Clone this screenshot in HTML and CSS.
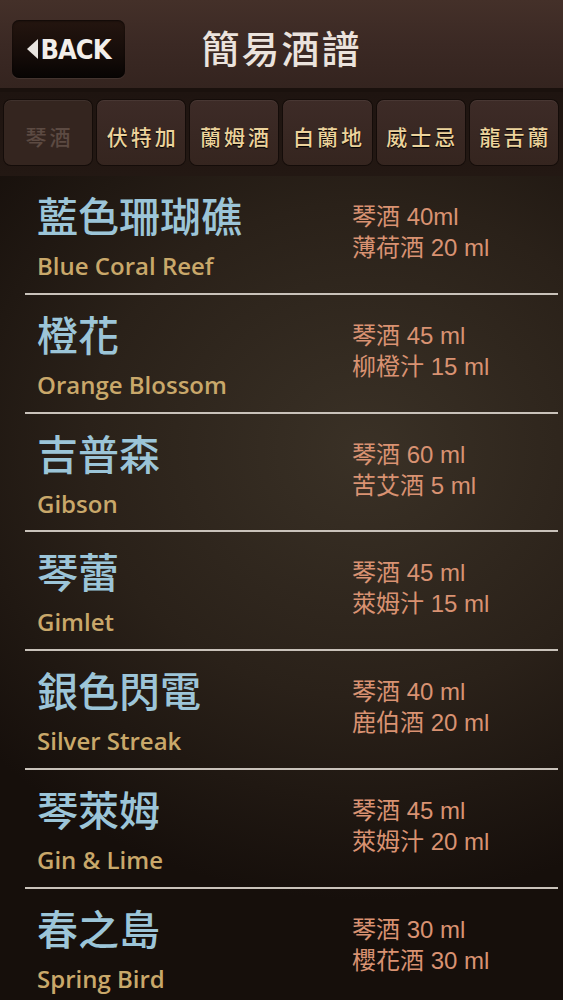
FILE: index.html
```html
<!DOCTYPE html>
<html lang="zh-Hant">

<head>
    <meta charset="UTF-8">
    <meta name="viewport" content="width=device-width, initial-scale=1.0">
    <title>簡易酒譜</title>
    <link rel="stylesheet" href="styles.css">
</head>

<body>
    <div class="header">
        <a href="javascript:;" class="back"><span class="arrow"></span>BACK</a>
        <h1 class="title">簡易酒譜</h1>
        <span></span>
    </div>
    <ul class="tabs">
        <li class="current">琴酒</li>
        <li>伏特加</li>
        <li>蘭姆酒</li>
        <li>白蘭地</li>
        <li>威士忌</li>
        <li>龍舌蘭</li>
    </ul>
    <ul class="list">
        <li>
            <div class="name">
                <h2>藍色珊瑚礁</h2>
                <p>Blue Coral Reef</p>
            </div>
            <div class="recipe">
                <p>琴酒 40ml</p>
                <p>薄荷酒 20 ml</p>
            </div>
        </li>
        <li>
            <div class="name">
                <h2>橙花</h2>
                <p>Orange Blossom</p>
            </div>
            <div class="recipe">
                <p>琴酒 45 ml</p>
                <p>柳橙汁 15 ml</p>
            </div>
        </li>
        <li>
            <div class="name">
                <h2>吉普森</h2>
                <p>Gibson</p>
            </div>
            <div class="recipe">
                <p>琴酒 60 ml</p>
                <p>苦艾酒 5 ml</p>
            </div>
        </li>
        <li>
            <div class="name">
                <h2>琴蕾</h2>
                <p>Gimlet</p>
            </div>
            <div class="recipe">
                <p>琴酒 45 ml</p>
                <p>萊姆汁 15 ml</p>
            </div>
        </li>
        <li>
            <div class="name">
                <h2>銀色閃電</h2>
                <p>Silver Streak</p>
            </div>
            <div class="recipe">
                <p>琴酒 40 ml</p>
                <p>鹿伯酒 20 ml</p>
            </div>
        </li>
        <li>
            <div class="name">
                <h2>琴萊姆</h2>
                <p>Gin &amp; Lime</p>
            </div>
            <div class="recipe">
                <p>琴酒 45 ml</p>
                <p>萊姆汁 20 ml</p>
            </div>
        </li>
        <li>
            <div class="name">
                <h2>春之島</h2>
                <p>Spring Bird</p>
            </div>
            <div class="recipe">
                <p>琴酒 30 ml</p>
                <p>櫻花酒 30 ml</p>
            </div>
        </li>
    </ul>
</body>

</html>
```

FILE: styles.css
```css
* {
    margin: 0;
    padding: 0;
    box-sizing: border-box;
}

ul,
ol {
    list-style: none;
}

html,
body {
    height: 100%;
}

body {
    overflow: hidden;
    font-family: "Liberation Sans", "Noto Sans CJK TC", sans-serif;
    background: radial-gradient(ellipse 90% 45% at 65% 45%, #3a3126 0%, #2a2119 55%, #160f0b 100%);
    background-color: #1d1510;
}

/* 頂部標題列 */
.header {
    display: grid;
    grid-template-columns: 1fr auto 1fr;
    align-items: start;
    height: 92px;
    padding: 20px 12px 0;
    background: linear-gradient(#443029 0%, #3b2924 50%, #34241f 100%);
    border-bottom: 4px solid #1a110d;
}

.back {
    display: flex;
    align-items: center;
    justify-content: center;
    width: 113px;
    height: 58px;
    border-radius: 7px;
    background: linear-gradient(#24150f 0%, #150c09 60%, #070403 100%);
    box-shadow: 0 1px 1px rgba(255, 255, 255, 0.08), inset 0 1px 2px rgba(0, 0, 0, 0.6);
    color: #f2eeea;
    text-decoration: none;
    font-family: "DejaVu Sans Condensed", "DejaVu Sans", sans-serif;
    font-weight: bold;
    font-size: 27px;
    letter-spacing: -1px;
    justify-self: start;
}

.arrow {
    width: 0;
    height: 0;
    margin-right: 3px;
    border-top: 10px solid transparent;
    border-bottom: 10px solid transparent;
    border-right: 11px solid #e8e4e0;
}

.title {
    font-family: "Noto Sans CJK TC", sans-serif;
    font-weight: 500;
    font-size: 38px;
    line-height: 54px;
    color: #ebe3dd;
    letter-spacing: 2px;
}

/* 酒類分頁 */
.tabs {
    display: grid;
    grid-template-columns: repeat(6, 1fr);
    gap: 5px;
    height: 84px;
    padding: 8px 5px 11px 4px;
    background: linear-gradient(#1e1410, #231813);
}

.tabs li {
    display: flex;
    align-items: center;
    justify-content: center;
    padding: 7px 0 0 3px;
    border-radius: 7px;
    background: linear-gradient(#3d2b27, #35251f);
    box-shadow: 0 0 0 1px #140c09, inset 0 1px 0 rgba(255, 255, 255, 0.06);
    font-family: "Noto Sans CJK TC", serif;
    font-weight: 500;
    font-size: 21px;
    letter-spacing: 3px;
    color: #ecd39c;
    text-shadow: 0 1px 1px #000;
    cursor: pointer;
}

.tabs li.current {
    color: #5c4a42;
    text-shadow: none;
    background: #34251f;
}

/* 酒譜列表 */
.list li {
    display: flex;
    height: 118.8px;
    margin: 0 5px 0 25px;
    padding: 16px 0 0 12px;
    border-bottom: 2px solid #c9c2ba;
}

.name {
    width: 315px;
}

.name h2 {
    font-family: "Noto Sans CJK TC", sans-serif;
    font-weight: 500;
    font-size: 41px;
    line-height: 44px;
    color: #9cc5d8;
}

.name p {
    margin-top: 12px;
    font-family: "Open Sans", sans-serif;
    font-weight: 600;
    font-size: 24px;
    line-height: 36px;
    color: #c9a86a;
}

.recipe {
    padding-top: 9px;
}

.recipe p {
    font-family: "Liberation Sans", "Noto Sans CJK TC", sans-serif;
    font-size: 24px;
    line-height: 31px;
    color: #d99272;
}
```
